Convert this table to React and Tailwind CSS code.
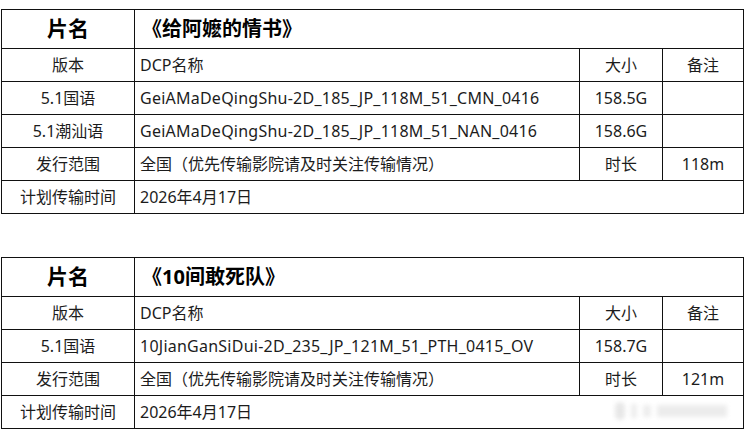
import React from "react";

const font = { fontFamily: '"Noto Sans", "Noto Sans CJK SC", sans-serif' };

function Cell({ children, className = "" }) {
  return (
    <div className={"border-r border-b border-[#111] flex items-center text-[16px] text-[#1c1c1c] " + className}>
      {children}
    </div>
  );
}

function Table({ title, rows, duration, date }) {
  return (
    <div className="ml-px w-[743px] border-l border-t border-[#111] grid grid-cols-[133px_445px_83px_81px] relative">
      <Cell className="h-[39px] justify-center">
        <span className="text-[21px] font-bold text-black">片名</span>
      </Cell>
      <Cell className="h-[39px] col-span-3 pl-[7px]">
        <span className="text-[20px] font-bold text-black">《{title}》</span>
      </Cell>

      <Cell className="h-[33px] justify-center">版本</Cell>
      <Cell className="h-[33px] pl-[5px]">DCP名称</Cell>
      <Cell className="h-[33px] justify-center">大小</Cell>
      <Cell className="h-[33px] justify-center">备注</Cell>

      {rows.map((r) => (
        <React.Fragment key={r[1]}>
          <Cell className="h-[33px] justify-center">{r[0]}</Cell>
          <Cell className="h-[33px] pl-[5px] tracking-[0.24px]">{r[1]}</Cell>
          <Cell className="h-[33px] justify-center">{r[2]}</Cell>
          <Cell className="h-[33px]"></Cell>
        </React.Fragment>
      ))}

      <Cell className="h-[33px] justify-center">发行范围</Cell>
      <Cell className="h-[33px] pl-[5px]">全国（优先传输影院请及时关注传输情况）</Cell>
      <Cell className="h-[33px] justify-center">时长</Cell>
      <Cell className="h-[33px] justify-center">{duration}</Cell>

      <Cell className="h-[33px] justify-center">计划传输时间</Cell>
      <Cell className="h-[33px] col-span-3 pl-[5px]">{date}</Cell>
    </div>
  );
}

export default function App() {
  return (
    <div className="w-[749px] h-[434px] bg-white overflow-hidden relative" style={font}>
      <div className="pt-[9px]">
        <Table
          title="给阿嬷的情书"
          rows={[
            ["5.1国语", "GeiAMaDeQingShu-2D_185_JP_118M_51_CMN_0416", "158.5G"],
            ["5.1潮汕语", "GeiAMaDeQingShu-2D_185_JP_118M_51_NAN_0416", "158.6G"],
          ]}
          duration="118m"
          date="2026年4月17日"
        />
      </div>
      <div className="pt-[43px]">
        <Table
          title="10间敢死队"
          rows={[["5.1国语", "10JianGanSiDui-2D_235_JP_121M_51_PTH_0415_OV", "158.7G"]]}
          duration="121m"
          date="2026年4月17日"
        />
      </div>
      <div className="absolute left-[615px] top-[402px] flex items-center gap-[6px] blur-[2px] opacity-60">
        <div className="w-[10px] h-[18px] rounded-full bg-[#d8d8d8]"></div>
        <div className="w-[6px] h-[14px] bg-[#e2e2e2]"></div>
        <div className="w-[8px] h-[12px] bg-[#e2e2e2]"></div>
        <div className="w-[70px] h-[12px] bg-[#e0e0e0]"></div>
      </div>
    </div>
  );
}
